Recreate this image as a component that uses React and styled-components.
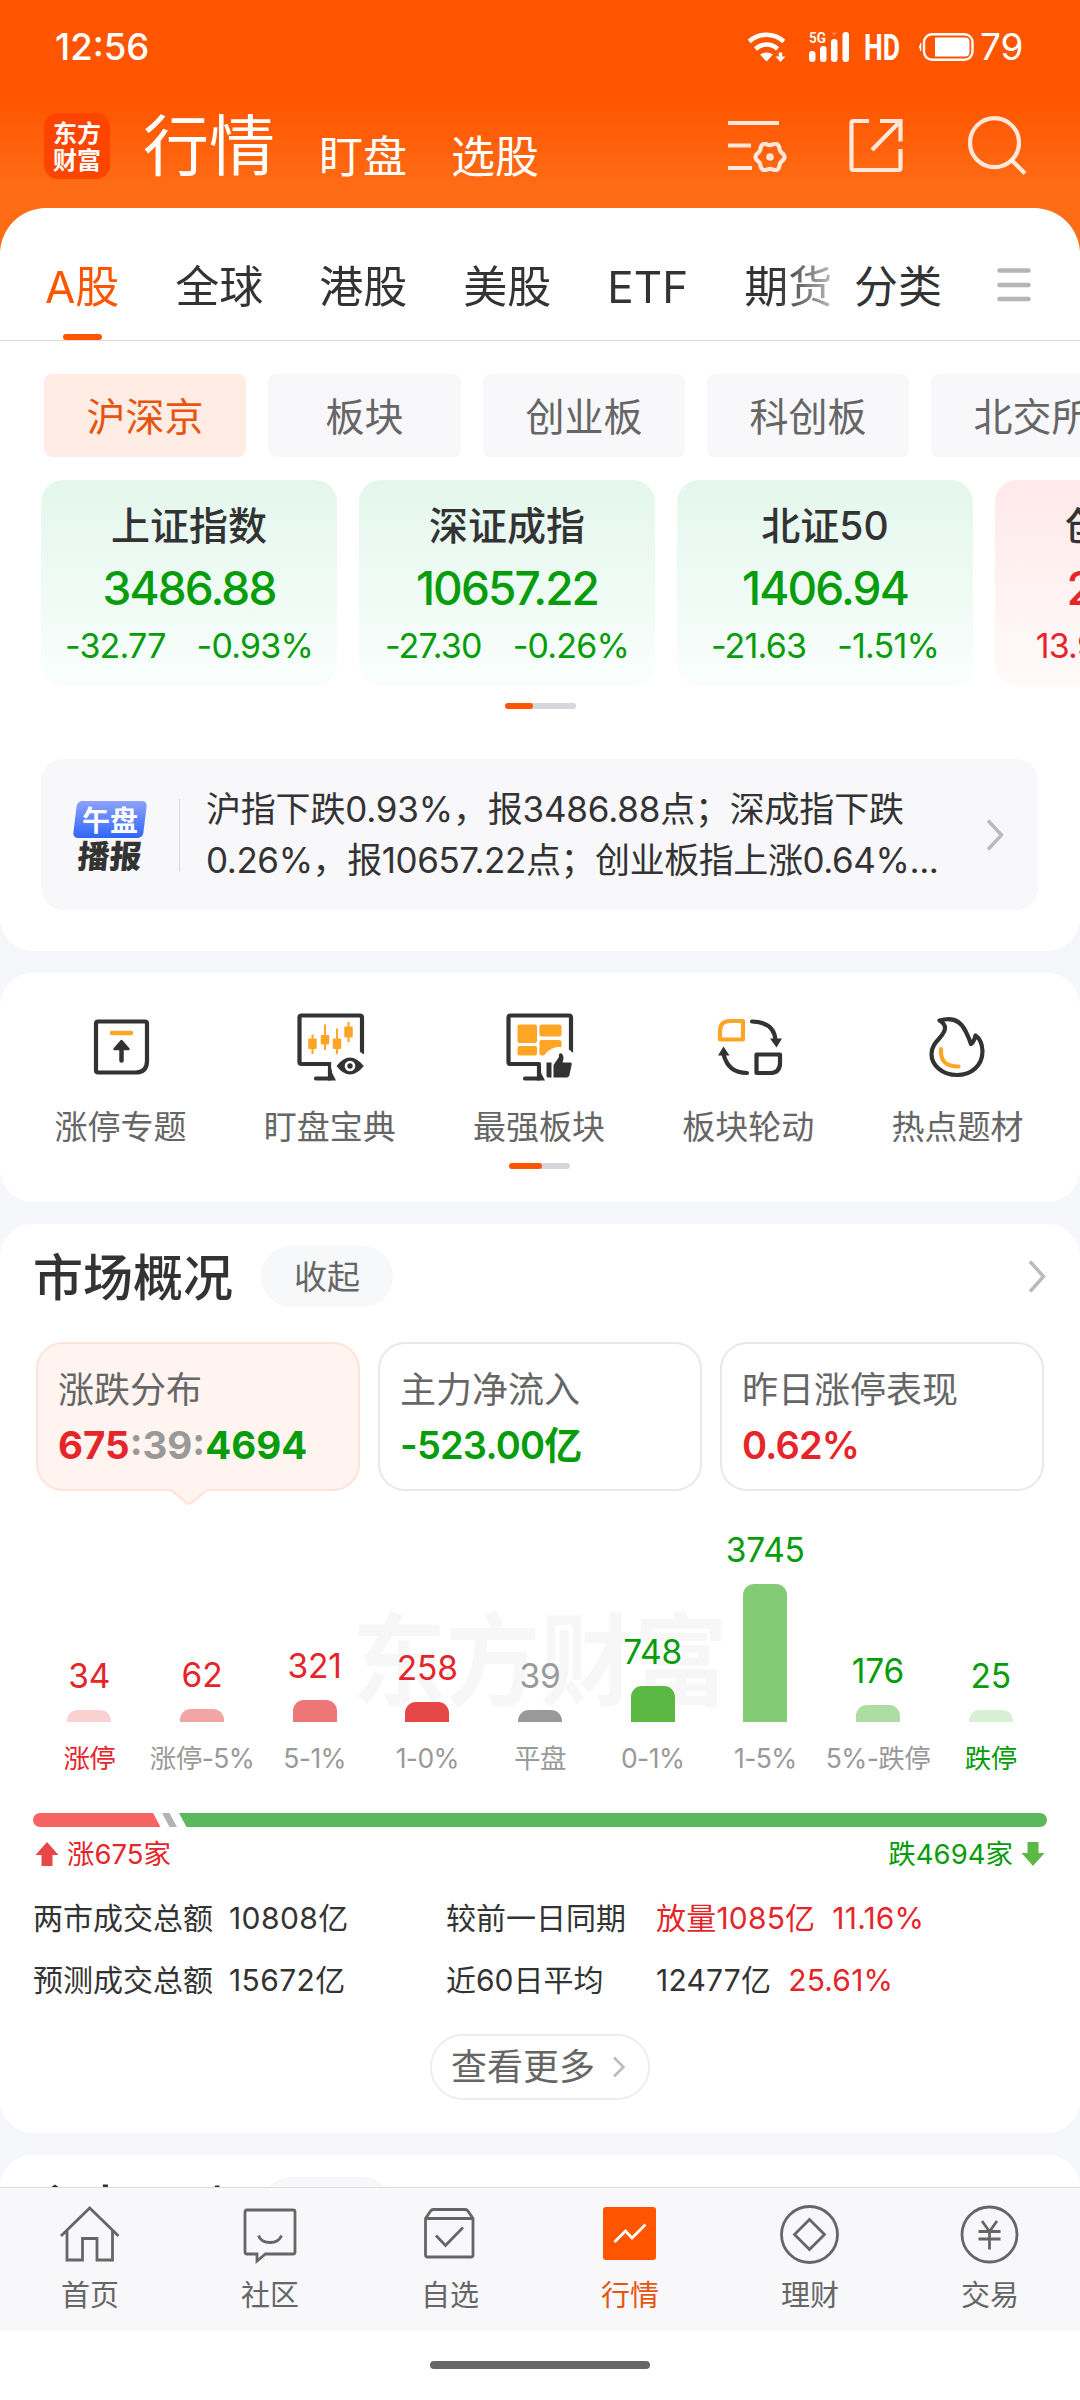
import React, { useState } from "react";
import styled, { createGlobalStyle } from "styled-components";

const GlobalStyle = createGlobalStyle`
  * {
    box-sizing: border-box;
  }

  body {
    margin: 0;
    background: #fff;
    font-family: Inter, "Noto Sans CJK SC", sans-serif;
    color: #333;
  }
`;

const colors = {
  brand: "#ff5500",
  up: "#e6252a",
  down: "#069c0a",
  flat: "#999",
  text: "#333",
  sub: "#666",
};

const Page = styled.div`
  width: 1080px;
  height: 2400px;
  display: flex;
  flex-direction: column;
  overflow: hidden;
`;

const Content = styled.main`
  height: 2187px;
  flex-shrink: 0;
  overflow: hidden;
  background: #f6f7fa;
`;

/* ---------- header ---------- */

const Header = styled.header`
  height: 260px;
  background: linear-gradient(#ff5500 98px, #ff6c16 190px, #ff6c16);
  color: #fff;
`;

const StatusBar = styled.div`
  height: 92px;
  padding: 1px 55px 0 55px;
  display: flex;
  align-items: center;
  font-size: 36.5px;
  line-height: 46px;
  font-weight: 500;

  svg {
    display: block;
    overflow: visible;
  }
`;

const StatusIcons = styled.div`
  margin-left: auto;
  display: flex;
  align-items: center;
`;

const StatusIcon = styled.svg`
  margin-right: ${(props) => props.$gap}px;
`;

const BatteryText = styled.span`
  font-size: 37px;
  font-weight: 400;
  width: 45px;
  white-space: nowrap;
`;

const TitleBar = styled.div`
  height: 108px;
  padding: 0 53px 0 44px;
  display: flex;
  align-items: center;
`;

const Logo = styled.div`
  width: 66px;
  height: 66px;
  margin-right: 33px;
  padding-bottom: 2px;
  border-radius: 14px;
  background: #ff4400;
  display: flex;
  align-items: center;
  justify-content: center;
  font-family: "Noto Sans CJK SC", sans-serif;
  font-size: 24px;
  line-height: 27px;
  font-weight: 700;
  text-align: center;
`;

const MainTitle = styled.h1`
  margin: 0 44px 0 0;
  font-size: 66px;
  line-height: 66px;
  font-weight: 400;
`;

const SubTitle = styled.span`
  margin-right: 44px;
  padding-top: 22px;
  font-size: 44px;
  line-height: 44px;
`;

const HeaderIcons = styled.div`
  margin-left: auto;
  display: flex;
  gap: 59.5px;

  svg {
    display: block;
    stroke: rgba(255, 255, 255, 0.85);
    stroke-width: 4.2;
    fill: none;
  }
`;

/* ---------- market tabs ---------- */

const Card = styled.section`
  background: #fff;
  border-radius: 33px;
  margin-bottom: 22px;
  overflow: hidden;
`;

const MarketCard = styled(Card)`
  margin-top: -52px;
  height: 743px;
  border-radius: 46px 46px 33px 33px;
`;

const TabBar = styled.nav`
  height: 133px;
  display: flex;
  border-bottom: 1px solid #dcdcdc;
  font-size: 44px;
  line-height: 48px;
`;

const TabScroll = styled.div`
  width: 831px;
  padding-left: 45px;
  display: flex;
  gap: 56px;
  overflow: hidden;
  white-space: nowrap;
  mask-image: linear-gradient(to right, #000 778px, rgba(0, 0, 0, 0.35) 831px);
`;

const Tab = styled.div`
  padding-top: 55px;
  display: flex;
  flex-direction: column;
  align-items: center;
  flex-shrink: 0;
  color: ${(props) => (props.$active ? colors.brand : colors.text)};
`;

const TabLine = styled.i`
  width: 39px;
  height: 6px;
  margin-top: auto;
  border-radius: 3px;
  background: ${colors.brand};
`;

const Category = styled.div`
  padding: 55px 55px 0 23px;
`;

const MenuIcon = styled.svg`
  margin-top: 59px;
`;

const Chips = styled.div`
  margin: 33px 0 23px;
  padding-left: 44px;
  display: flex;
  gap: 22px;
`;

const Chip = styled.div`
  min-width: 193px;
  padding: 0 42.5px;
  flex-shrink: 0;
  border-radius: 8px;
  font-size: 39px;
  line-height: 86px;
  height: 83px;
  text-align: center;
  white-space: nowrap;
  background: ${(props) => (props.$active ? "#ffece4" : "#f8f8fa")};
  color: ${(props) => (props.$active ? "#e6550f" : colors.sub)};
`;

const IndexRow = styled.div`
  padding-left: 41px;
  display: flex;
  gap: 22px;
`;

const IndexCard = styled.div`
  width: 296px;
  height: 206px;
  padding-top: 21px;
  flex-shrink: 0;
  border-radius: 22px;
  text-align: center;
  white-space: nowrap;
  color: ${(props) => (props.$up ? colors.up : colors.down)};
  background: ${(props) =>
    props.$up
      ? "linear-gradient(#ffe9ea, #fffafa)"
      : "linear-gradient(#e4f7ed, #f9fefc)"};
`;

const IndexName = styled.div`
  font-size: 39px;
  line-height: 50px;
  font-weight: 500;
  color: ${colors.text};
`;

const IndexPrice = styled.div`
  margin-top: 7px;
  font-size: 46px;
  line-height: 60px;
  font-weight: 500;
  letter-spacing: -1.9px;
`;

const IndexChange = styled.div`
  margin-top: 8px;
  display: flex;
  justify-content: center;
  gap: 31px;
  font-size: 34px;
  line-height: 40px;
  letter-spacing: -0.8px;
`;

const Pager = styled.div`
  width: ${(props) => props.$width}px;
  height: 6px;
  margin: ${(props) => props.$top}px auto 0;
  border-radius: 3px;
  background: #d4d7dc;

  &::before {
    content: "";
    display: block;
    width: ${(props) => props.$active}px;
    height: 6px;
    border-radius: 3px;
    background: ${colors.brand};
  }
`;

const News = styled.div`
  height: 151px;
  margin: 50px 42px 0 41px;
  padding: 0 34px 0 32px;
  border-radius: 22px;
  background: #f8f8fa;
  display: flex;
  align-items: center;
`;

const NewsBadge = styled.div`
  width: 74px;
  font-family: "Noto Sans CJK SC", sans-serif;
  text-align: center;
`;

const BadgeTop = styled.div`
  position: relative;
  z-index: 0;
  height: 37px;
  margin: 0 2px 3px;
  color: #fff;
  font-size: 28px;
  line-height: 36px;
  font-weight: 700;

  &::before {
    content: "";
    position: absolute;
    inset: 0;
    z-index: -1;
    border-radius: 5px;
    transform: skewX(-7deg);
    background: linear-gradient(#8ea2ff, #2f66fa);
  }
`;

const BadgeBottom = styled.div`
  height: 28px;
  font-size: 32px;
  line-height: 26px;
  font-weight: 900;
  transform: skewX(-5deg);
`;

const NewsDivider = styled.i`
  width: 1px;
  height: 72px;
  margin: 0 26px 0 32px;
  background: #d8d8dc;
`;

const NewsText = styled.div`
  flex: 1;
  padding-top: 1px;
  font-size: 35px;
  line-height: 51px;
  white-space: nowrap;
`;

const NewsLine = styled.div`
  letter-spacing: ${(props) => props.$spacing}px;
`;

/* ---------- shortcuts ---------- */

const ShortcutCard = styled(Card)`
  height: 229px;
  padding: 40px 18px 0 16px;
`;

const ShortcutGrid = styled.div`
  display: grid;
  grid-template-columns: repeat(5, 1fr);
`;

const Shortcut = styled.div`
  display: flex;
  flex-direction: column;
  align-items: center;
  gap: 23px;
  font-size: 33px;
  line-height: 46px;
  color: ${colors.sub};

  svg {
    overflow: visible;
  }
`;

/* ---------- overview ---------- */

const OverviewCard = styled(Card)`
  height: 909px;
  padding-top: 22px;
`;

const SectionHead = styled.div`
  height: 61px;
  padding: 0 34px 0 33px;
  display: flex;
  align-items: center;
`;

const SectionTitle = styled.h2`
  margin: 0 28px 0 0;
  padding-top: 3px;
  font-size: 50px;
  line-height: 61px;
  font-weight: 500;
`;

const FoldButton = styled.button`
  width: 132px;
  height: 61px;
  margin-right: auto;
  padding: 0;
  border: none;
  border-radius: 31px;
  background: #f7f8fa;
  font-family: inherit;
  font-size: 33px;
  line-height: 62px;
  color: ${colors.sub};
`;

const StatCards = styled.div`
  margin-top: 35px;
  padding-left: 36px;
  display: flex;
  gap: 18px;
`;

const StatCard = styled.div`
  position: relative;
  width: 324px;
  height: 149px;
  padding: 24px 0 0 20px;
  border: 2px solid ${(props) => (props.$active ? "#fde3d8" : "#e8e8e8")};
  border-radius: 27px;
  background: ${(props) => (props.$active ? "#fff4ef" : "#fff")};
`;

const StatLabel = styled.div`
  font-size: 36px;
  line-height: 44px;
  color: ${colors.sub};
`;

const StatValue = styled.div`
  margin-top: 11px;
  font-size: ${(props) => (props.$large ? 38.5 : 38)}px;
  line-height: 44px;
  font-weight: ${(props) => (props.$large ? 700 : 600)};
  letter-spacing: ${(props) => (props.$large ? 0 : -0.8)}px;
  color: ${colors.flat};
`;

const Tone = styled.span`
  color: ${(props) => colors[props.$tone]};
`;

const Pointer = styled.svg`
  position: absolute;
  left: 133px;
  top: 144px;
`;

const Chart = styled.div`
  position: relative;
  height: 285px;
  padding: 0 33px;
  display: grid;
  grid-template-columns: repeat(9, 1fr);
`;

const Watermark = styled.div`
  position: absolute;
  left: 0;
  right: 0;
  top: 116px;
  text-align: center;
  font-family: "Noto Sans CJK SC", sans-serif;
  font-size: 94px;
  line-height: 94px;
  font-weight: 700;
  color: #f7f7f7;
  transform: scaleY(1.07);
`;

const Bar = styled.div`
  position: relative;
  display: flex;
  flex-direction: column;
  align-items: center;
  justify-content: flex-end;
  white-space: nowrap;
`;

const BarValue = styled.div`
  margin-bottom: 14px;
  font-size: 33.5px;
  line-height: 40px;
  letter-spacing: -0.2px;
  color: ${(props) => colors[props.$tone]};
`;

const BarFill = styled.div`
  width: 44px;
  border-radius: 11px 11px 0 0;
  background: ${(props) => props.$color};
`;

const BarLabel = styled.div`
  margin-top: 18px;
  font-size: 26.5px;
  line-height: 36px;
  letter-spacing: -0.6px;
  color: ${(props) => colors[props.$tone]};
`;

const Ratio = styled.svg`
  display: block;
  margin: 37px 0 0 33px;
`;

const RatioText = styled.div`
  margin-top: 11px;
  padding: 0 35px;
  display: flex;
  justify-content: space-between;
  font-size: 27.5px;
  line-height: 32px;
`;

const RatioSide = styled.div`
  display: flex;
  align-items: center;
  gap: 8px;
  color: ${(props) => colors[props.$tone]};
`;

const Totals = styled.div`
  margin-top: 17px;
  padding-left: 33px;
  display: grid;
  grid-template-columns: 196px 217px 210px auto;
  font-size: 30px;
  line-height: 62px;
`;

const Amount = styled.span`
  letter-spacing: 0.4px;
`;

const Compare = styled.div`
  display: flex;
  gap: 17px;
  letter-spacing: 0.2px;
`;

const MoreButton = styled.button`
  width: 220px;
  height: 66px;
  margin: 23px auto 0;
  padding: 0 3px 0 0;
  display: flex;
  align-items: center;
  justify-content: center;
  gap: 17px;
  border: 2px solid #ededed;
  border-radius: 33px;
  background: #fff;
  font-family: inherit;
  font-size: 36px;
  line-height: 62px;
  color: ${colors.sub};
`;

const NextCard = styled(Card)`
  padding-top: 22px;
  margin-bottom: 0;
`;

/* ---------- bottom nav ---------- */

const NavBar = styled.nav`
  height: 144px;
  border-top: 1px solid #dcdcde;
  background: #f8f8fa;
  display: grid;
  grid-template-columns: repeat(6, 1fr);
`;

const NavItem = styled.div`
  padding-top: 16px;
  display: flex;
  flex-direction: column;
  align-items: center;
  gap: 14px;
  font-size: 29px;
  line-height: 36px;
  color: ${(props) => (props.$active ? "#e6550f" : colors.sub)};

  svg {
    fill: none;
    stroke: currentColor;
    stroke-width: 2.8;
  }
`;

const Gesture = styled.div`
  flex: 1;
  display: flex;
  justify-content: center;
  padding-top: 30px;

  &::before {
    content: "";
    width: 220px;
    height: 8px;
    border-radius: 4px;
    background: #666;
  }
`;

/* ---------- icons ---------- */

const gearPath = (cx, cy, r, depth) => {
  const pts = [];
  for (let i = 0; i < 72; i++) {
    const a = (i / 72) * Math.PI * 2;
    const rr = r + depth * Math.cos(a * 6);
    pts.push(
      `${(cx + rr * Math.cos(a)).toFixed(2)} ${(cy + rr * Math.sin(a)).toFixed(2)}`
    );
  }
  return `M${pts.join("L")}Z`;
};

const Chevron = ({ width, height, color = "#bbb", stroke = 3.5 }) => (
  <svg width={width} height={height} viewBox={`0 0 ${width} ${height}`}>
    <path
      d={`M2 1.5L${width - 2.5} ${height / 2}L2 ${height - 1.5}`}
      fill="none"
      stroke={color}
      strokeWidth={stroke}
    />
  </svg>
);

const Monitor = ({ children }) => (
  <svg width="68" height="68" viewBox="0 0 68 68">
    <path
      d="M66 40V4.5Q66 2.5 64 2.5H5.5Q3.5 2.5 3.5 4.5V49Q3.5 51 5.5 51H34V65.5H20"
      fill="none"
      stroke="#333"
      strokeWidth="4.2"
      strokeLinecap="round"
      strokeLinejoin="round"
    />
    <path d="M32 52L40 67.500H32Z" fill="#333" />
    {children}
  </svg>
);

const candles = [
  [16.5, 25.5, 36, 21.5, 41],
  [29, 22, 31.5, 11.5, 37],
  [41, 25.5, 36, 15.5, 42.5],
  [52.5, 13.5, 24.5, 9, 29],
];

const LimitUpIcon = () => (
  <svg width="68" height="68" viewBox="0 0 68 68" fill="none">
    <path
      d="M11 8.5H58Q60 8.5 60 10.5V48Q60 59.5 48.5 59.5H11Q9 59.5 9 57.5V10.5Q9 8.5 11 8.5Z"
      stroke="#333"
      strokeWidth="4.2"
    />
    <path d="M25 20H44" stroke="#ffa526" strokeWidth="4.5" strokeLinecap="round" />
    <path d="M34.5 36V47.5" stroke="#333" strokeWidth="4.5" strokeLinecap="round" />
    <path
      d="M34.5 28L41.5 36H27.5Z"
      fill="#333"
      stroke="#333"
      strokeWidth="2.5"
      strokeLinejoin="round"
    />
  </svg>
);

const WatchIcon = () => (
  <Monitor>
    {candles.map(([x, top, bottom, high, low]) => (
      <g key={x} fill="#ffa526">
        <rect x={x - 4.25} y={top} width="8.5" height={bottom - top} rx="1" />
        <rect x={x - 1} y={high} width="2" height={low - high} />
      </g>
    ))}
    <ellipse cx="54" cy="53" rx="19" ry="16.5" fill="#fff" />
    <path d="M40.5 53Q47 44.5 54 44.5T67.8 53Q61 61.5 54 61.5T40.5 53Z" fill="#333" />
    <circle cx="54" cy="53" r="5.3" fill="#fff" />
    <circle cx="54" cy="53" r="2.7" fill="#333" />
  </Monitor>
);

const BestSectorIcon = () => (
  <Monitor>
    <g fill="#ffa526">
      <rect x="12.5" y="11.5" width="19.5" height="18.5" rx="2" />
      <rect x="12.5" y="33" width="19.5" height="9.5" rx="2" />
      <rect x="34.5" y="11.5" width="22" height="12" rx="2" />
      <rect x="34.5" y="27" width="22" height="15.5" rx="2" />
    </g>
    <circle cx="54.5" cy="52.5" r="18.5" fill="#fff" />
    <path
      d="M41.5 49.5H46.5V64.5H43Q41.5 64.5 41.5 63ZM48.5 64.5V52L54 44V41.5Q55.5 39 57.5 41.5Q59.5 44.5 57.5 49.5H65.5Q67 49.5 66.7 51.5L64.3 62.5Q63.5 64.5 62 64.5Z"
      fill="#333"
    />
  </Monitor>
);

const RotateIcon = () => (
  <svg width="68" height="68" viewBox="0 0 68 68" fill="none" strokeWidth="4.2">
    <path d="M6 26.5V18Q6 8 16 8H29V26.5Z" stroke="#ffa526" strokeLinejoin="round" />
    <path d="M42.5 41.5H66V50Q66 60 56 60H42.5Z" stroke="#333" strokeLinejoin="round" />
    <path d="M38 8.5Q60 9 61.5 27M33 60Q14 60 9.5 41" stroke="#333" strokeLinecap="round" />
    <path d="M56 25.5H68L62.5 34.5ZM4 42.5H15.5L9.5 33.5Z" fill="#333" />
  </svg>
);

const FlameIcon = () => (
  <svg width="68" height="68" viewBox="0 0 68 68" fill="none" strokeWidth="4.2">
    <path
      d="M16.5 7.5Q35 2 42.5 18Q46 25 48 31Q51 29 52.5 22.5Q59 27 59.5 38C59.5 53 48 62 34 62C19 62 8.5 52 8.5 41C8.5 28 22 24 22 15Q22 11 17.5 8"
      stroke="#333"
      strokeLinejoin="round"
      strokeLinecap="round"
    />
    <path d="M18 36Q16.5 53.5 35.5 53.5" stroke="#ffa526" strokeLinecap="round" />
  </svg>
);

const navIcons = {
  home: <path d="M1 32L29.7 4L58.5 32M7 27V56H22.5V34.5H37V56H52.5V27" />,
  chat: (
    <>
      <path d="M7 6H53Q55 6 55 8V48Q55 50 53 50H25.5L17 57V50H7Q5 50 5 48V8Q5 6 7 6Z" />
      <path d="M18.5 31.5Q21 38.5 30 38.5T41.5 31.5" />
    </>
  ),
  pick: (
    <>
      <path d="M5.5 14.5L11 6.5Q12 5.5 13.5 5.5H45Q46.5 5.5 47.5 6.5L53 14.5V51Q53 53 51 53H7.5Q5.5 53 5.5 51ZM5.5 14.5H53" />
      <path d="M16 31.5L25.5 41.5L43 23.5" />
    </>
  ),
  market: (
    <>
      <rect x="3" y="3" width="53" height="53" rx="3" fill="#ff5500" stroke="none" />
      <path d="M14.5 38L25.5 27L32 34L45.5 20.5" stroke="#fff" />
    </>
  ),
  wealth: (
    <>
      <circle cx="29.5" cy="30.5" r="28" />
      <path d="M29.5 15.5L44.5 30.5L29.5 45.5L14.5 30.5Z" />
    </>
  ),
  trade: (
    <>
      <circle cx="29.5" cy="30.5" r="27.5" />
      <path d="M22 17L29.5 27.5L37 17M29.5 27V45.5M18.5 27.5H40.5M18.5 35H40.5" />
    </>
  ),
};

/* ---------- data ---------- */

const tabs = ["A股", "全球", "港股", "美股", "ETF", "期货"];
const boards = ["沪深京", "板块", "创业板", "科创板", "北交所"];

const indexes = [
  { name: "上证指数", price: "3486.88", diff: "-32.77", pct: "-0.93%" },
  { name: "深证成指", price: "10657.22", diff: "-27.30", pct: "-0.26%" },
  { name: "北证50", price: "1406.94", diff: "-21.63", pct: "-1.51%" },
  { name: "创业板指", price: "2181.38", diff: "13.93", pct: "0.64%", up: true },
];

const shortcuts = [
  { name: "涨停专题", Icon: LimitUpIcon },
  { name: "盯盘宝典", Icon: WatchIcon },
  { name: "最强板块", Icon: BestSectorIcon },
  { name: "板块轮动", Icon: RotateIcon },
  { name: "热点题材", Icon: FlameIcon },
];

const bars = [
  { label: "涨停", value: 34, height: 12, color: "#f9d1d1", tone: "up", strong: true },
  { label: "涨停-5%", value: 62, height: 13, color: "#f3a4a5", tone: "up" },
  { label: "5-1%", value: 321, height: 22, color: "#ed7677", tone: "up" },
  { label: "1-0%", value: 258, height: 20, color: "#e64848", tone: "up" },
  { label: "平盘", value: 39, height: 12, color: "#999", tone: "flat" },
  { label: "0-1%", value: 748, height: 36, color: "#5bb943", tone: "down" },
  { label: "1-5%", value: 3745, height: 138, color: "#84cb76", tone: "down" },
  { label: "5%-跌停", value: 176, height: 17, color: "#addda2", tone: "down" },
  { label: "跌停", value: 25, height: 12, color: "#d7efd3", tone: "down", strong: true },
];

const navItems = [
  { key: "home", name: "首页" },
  { key: "chat", name: "社区" },
  { key: "pick", name: "自选" },
  { key: "market", name: "行情" },
  { key: "wealth", name: "理财" },
  { key: "trade", name: "交易" },
];

const StatusRow = () => (
  <StatusBar>
    <span>12:56</span>
    <StatusIcons>
      <StatusIcon $gap={22} width="40" height="30" viewBox="0 0 40 30" fill="none" stroke="#fff" strokeWidth="4.5">
        <path d="M2.2 9.5A25.5 25.5 0 0 1 36.8 9.5M8.5 17A16 16 0 0 1 30.5 17" />
        <path d="M13 22.5Q19.5 18.5 26 22.5L19.5 29.5Z" fill="#fff" stroke="none" />
        <path d="M33.5 20.5V26" strokeWidth="3.5" />
        <path d="M28.5 24.5H38.5L33.5 30Z" fill="#fff" stroke="none" />
      </StatusIcon>
      <StatusIcon $gap={15} width="41" height="30" viewBox="0 0 41 30" fill="#fff">
        <text x="0" y="11" fontSize="15" fontWeight="600" fontFamily="Roboto, sans-serif" textLength="17" lengthAdjust="spacingAndGlyphs">5G</text>
        <rect x="0" y="19" width="6.5" height="11" rx="3" />
        <rect x="11" y="14" width="6.5" height="16" rx="3" />
        <rect x="22" y="7" width="6.5" height="23" rx="3" />
        <rect x="33.5" y="0" width="6.5" height="30" rx="3" />
        <path d="M22 0.5H28L25 4Z" opacity="0.25" />
      </StatusIcon>
      <StatusIcon $gap={18} width="35" height="30" viewBox="0 0 35 30" fill="#fff">
        <text x="-1" y="28" fontSize="36" fontWeight="700" fontFamily="Roboto, sans-serif" textLength="36" lengthAdjust="spacingAndGlyphs">HD</text>
      </StatusIcon>
      <StatusIcon $gap={6} width="56" height="28" viewBox="0 0 56 28">
        <rect x="6" y="1.3" width="48.5" height="25.5" rx="8" fill="none" stroke="#fff" strokeWidth="2.4" />
        <path d="M17 4.5H47Q51.500 4.5 51.500 9V19Q51.500 23.500 47 23.500H17Z" fill="#fff" />
        <path d="M2.8 10Q0.5 14 2.8 18Z" fill="#fff" stroke="#fff" />
      </StatusIcon>
      <BatteryText>79</BatteryText>
    </StatusIcons>
  </StatusBar>
);

const App = () => {
  const [activeTab, setActiveTab] = useState("A股");
  const [activeBoard, setActiveBoard] = useState("沪深京");

  return (
    <>
      <GlobalStyle />
      <Page>
        <Content>
          <Header>
            <StatusRow />
            <TitleBar>
              <Logo>
                东方
                <br />
                财富
              </Logo>
              <MainTitle>行情</MainTitle>
              <SubTitle>盯盘</SubTitle>
              <SubTitle>选股</SubTitle>
              <HeaderIcons>
                <svg width="60" height="60" viewBox="0 0 60 60">
                  <path d="M0 7H51M0 29.5H23M0 52H24" />
                  <path d={gearPath(42, 41, 13.2, 1.3)} />
                  <circle cx="42" cy="41" r="1.7" />
                </svg>
                <svg width="60" height="60" viewBox="0 0 60 60">
                  <path d="M21 5H5.5Q3.5 5 3.5 7V52Q3.5 54 5.5 54H50.5Q52.5 54 52.5 52V33M32 5H52.5V25.5M24 34L52 5.5" />
                </svg>
                <svg width="60" height="60" viewBox="0 0 60 60">
                  <circle cx="27.5" cy="26.7" r="24.5" />
                  <path d="M44.5 44L58 57.5" />
                </svg>
              </HeaderIcons>
            </TitleBar>
          </Header>

          <MarketCard>
            <TabBar>
              <TabScroll>
                {tabs.map((name) => (
                  <Tab
                    key={name}
                    $active={name === activeTab}
                    onClick={() => setActiveTab(name)}
                  >
                    {name}
                    {name === activeTab && <TabLine />}
                  </Tab>
                ))}
              </TabScroll>
              <Category>分类</Category>
              <MenuIcon width="34" height="36" viewBox="0 0 34 36">
                <path
                  d="M2.5 3.5H31.5M2.5 18H31.5M2.5 32H31.5"
                  stroke="#b5b5b5"
                  strokeWidth="4.5"
                  strokeLinecap="round"
                />
              </MenuIcon>
            </TabBar>

            <Chips>
              {boards.map((name) => (
                <Chip
                  key={name}
                  $active={name === activeBoard}
                  onClick={() => setActiveBoard(name)}
                >
                  {name}
                </Chip>
              ))}
            </Chips>

            <IndexRow>
              {indexes.map((item) => (
                <IndexCard key={item.name} $up={item.up}>
                  <IndexName>{item.name}</IndexName>
                  <IndexPrice>{item.price}</IndexPrice>
                  <IndexChange>
                    <span>{item.diff}</span>
                    <span>{item.pct}</span>
                  </IndexChange>
                </IndexCard>
              ))}
            </IndexRow>
            <Pager $width={71} $active={28} $top={17} />

            <News>
              <NewsBadge>
                <BadgeTop>午盘</BadgeTop>
                <BadgeBottom>播报</BadgeBottom>
              </NewsBadge>
              <NewsDivider />
              <NewsText>
                <NewsLine $spacing={-0.2}>
                  沪指下跌0.93%，报3486.88点；深成指下跌
                </NewsLine>
                <NewsLine $spacing={-0.42}>
                  0.26%，报10657.22点；创业板指上涨0.64%...
                </NewsLine>
              </NewsText>
              <Chevron width={18} height={32} />
            </News>
          </MarketCard>

          <ShortcutCard>
            <ShortcutGrid>
              {shortcuts.map(({ name, Icon }) => (
                <Shortcut key={name}>
                  <Icon />
                  {name}
                </Shortcut>
              ))}
            </ShortcutGrid>
            <Pager $width={61} $active={33} $top={13} />
          </ShortcutCard>

          <OverviewCard>
            <SectionHead>
              <SectionTitle>市场概况</SectionTitle>
              <FoldButton>收起</FoldButton>
              <Chevron width={18} height={33} />
            </SectionHead>

            <StatCards>
              <StatCard $active>
                <StatLabel>涨跌分布</StatLabel>
                <StatValue $large>
                  <Tone $tone="up">675</Tone>:39:<Tone $tone="down">4694</Tone>
                </StatValue>
                <Pointer width="36" height="18" viewBox="0 0 36 18">
                  <path d="M0 1.5L15 14.5Q18 17 21 14.5L36 1.5V0H0Z" fill="#fff4ef" />
                  <path d="M0 2L15 14.5Q18 17 21 14.5L36 2" fill="none" stroke="#fde3d8" strokeWidth="2" />
                </Pointer>
              </StatCard>
              <StatCard>
                <StatLabel>主力净流入</StatLabel>
                <StatValue>
                  <Tone $tone="down">-523.00亿</Tone>
                </StatValue>
              </StatCard>
              <StatCard>
                <StatLabel>昨日涨停表现</StatLabel>
                <StatValue>
                  <Tone $tone="up">0.62%</Tone>
                </StatValue>
              </StatCard>
            </StatCards>

            <Chart>
              <Watermark>东方财富</Watermark>
              {bars.map((bar) => (
                <Bar key={bar.label}>
                  <BarValue $tone={bar.tone}>{bar.value}</BarValue>
                  <BarFill $color={bar.color} style={{ height: bar.height }} />
                  <BarLabel $tone={bar.strong ? bar.tone : "flat"}>
                    {bar.label}
                  </BarLabel>
                </Bar>
              ))}
            </Chart>

            <Ratio width="1014" height="14" viewBox="0 0 1014 14">
              <path d="M7 0H120L127.5 14H7A7 7 0 0 1 7 0Z" fill="#f56463" />
              <path d="M129 0H136.5L144 14H136.5Z" fill="#b3b3b3" />
              <path d="M146 0H1007A7 7 0 0 1 1007 14H153.5Z" fill="#5bb95b" />
            </Ratio>
            <RatioText>
              <RatioSide $tone="up">
                <svg width="24" height="26" viewBox="0 0 24 26">
                  <path d="M12 1L23.5 14H17.5V25H6.5V14H0.5Z" fill="#e64848" />
                </svg>
                涨675家
              </RatioSide>
              <RatioSide $tone="down">
                跌4694家
                <svg width="24" height="26" viewBox="0 0 24 26">
                  <path d="M12 25L23.5 12H17.5V1H6.5V12H0.5Z" fill="#5bb943" />
                </svg>
              </RatioSide>
            </RatioText>

            <Totals>
              <span>两市成交总额</span>
              <Amount>10808亿</Amount>
              <span>较前一日同期</span>
              <Compare>
                <Tone $tone="up">放量1085亿</Tone>
                <Tone $tone="up">11.16%</Tone>
              </Compare>
              <span>预测成交总额</span>
              <Amount>15672亿</Amount>
              <span>近60日平均</span>
              <Compare>
                <span>12477亿</span>
                <Tone $tone="up">25.61%</Tone>
              </Compare>
            </Totals>

            <MoreButton>
              查看更多
              <Chevron width={14} height={22} stroke={2.5} />
            </MoreButton>
          </OverviewCard>

          <NextCard>
            <SectionHead>
              <SectionTitle>主力异动</SectionTitle>
              <FoldButton>收起</FoldButton>
            </SectionHead>
          </NextCard>
        </Content>

        <NavBar>
          {navItems.map((item) => (
            <NavItem key={item.key} $active={item.key === "market"}>
              <svg width="60" height="60" viewBox="0 0 60 60">
                {navIcons[item.key]}
              </svg>
              {item.name}
            </NavItem>
          ))}
        </NavBar>
        <Gesture />
      </Page>
    </>
  );
};

export default App;
